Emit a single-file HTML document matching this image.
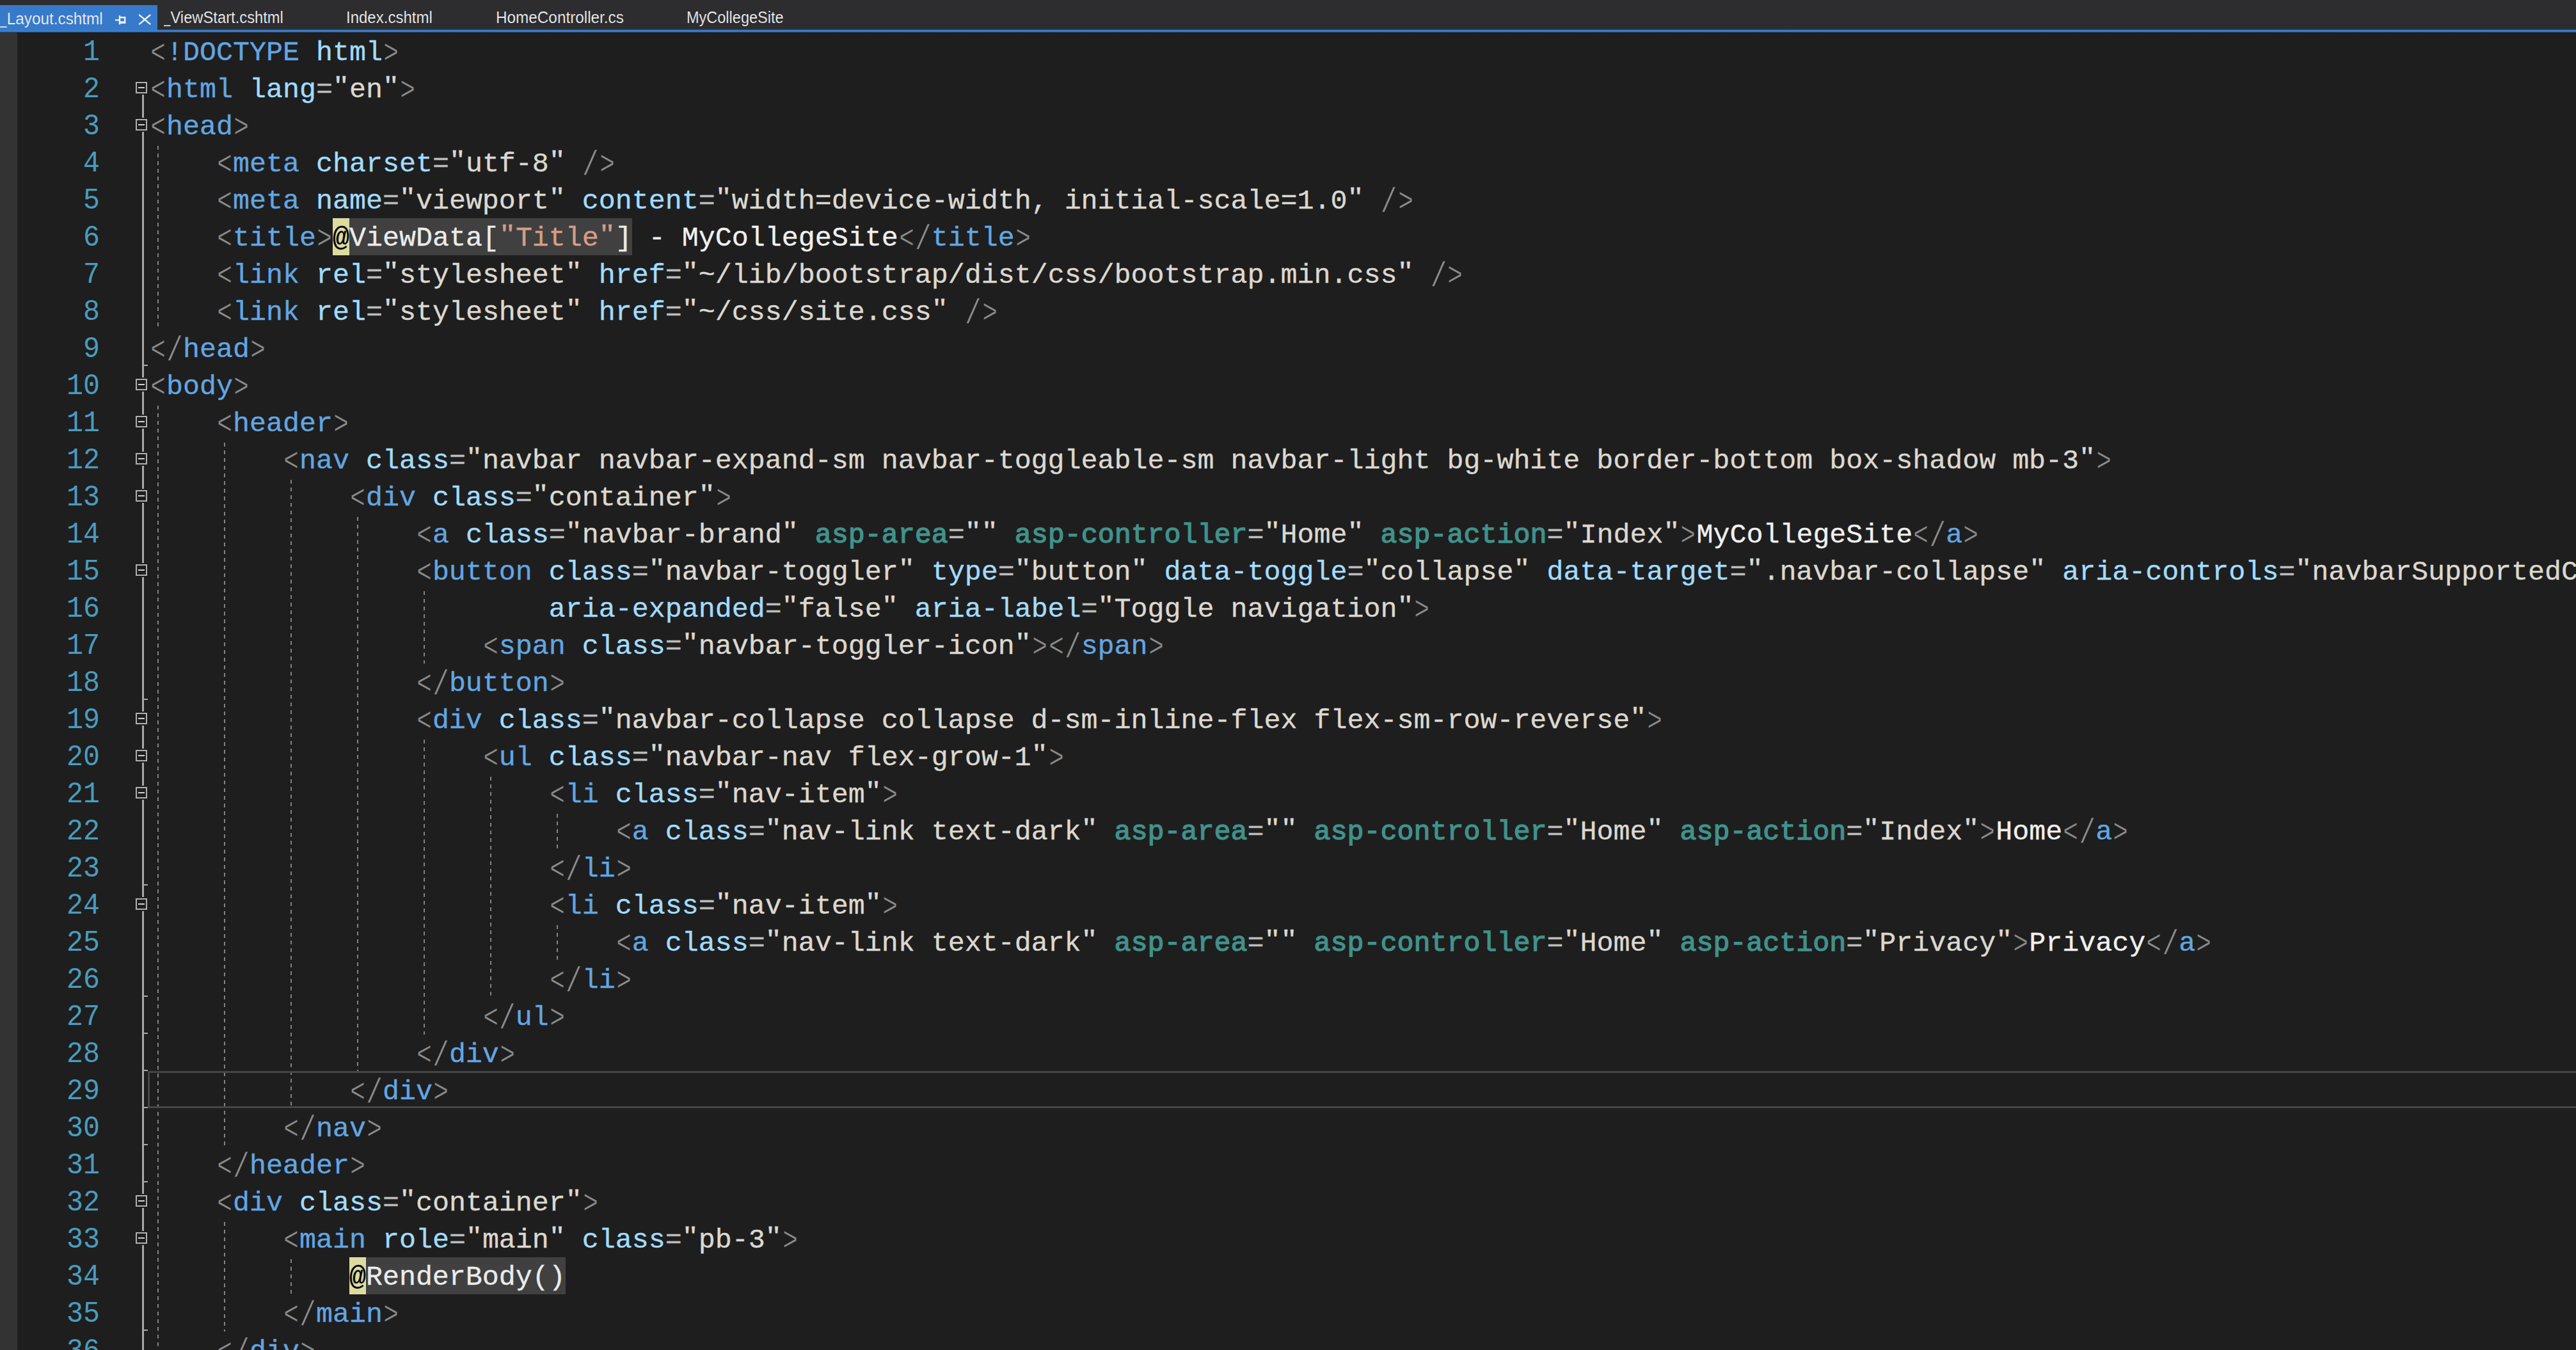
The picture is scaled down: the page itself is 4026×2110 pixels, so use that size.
<!DOCTYPE html><html><head><meta charset="utf-8"><style>
html,body{margin:0;padding:0}
body{width:4026px;height:2110px;background:#1e1e1e;overflow:hidden;position:relative;font-family:"Liberation Mono",monospace}
#tabs{position:absolute;left:0;top:0;width:4026px;height:46px;background:#2d2d30}
#bl{position:absolute;left:0;top:44px;width:4026px;height:8px;background:linear-gradient(to bottom,#302a2a 0px,#302a2a 1px,rgba(58,128,212,.12) 1px,rgba(58,128,212,.12) 2px,rgba(58,128,212,.45) 2px,rgba(58,128,212,.45) 3px,rgb(58,128,212) 3px,rgb(58,128,212) 4px,rgb(58,128,212) 4px,rgb(58,128,212) 5px,rgba(58,128,212,.85) 5px,rgba(58,128,212,.85) 6px,rgba(58,128,212,.35) 6px,rgba(58,128,212,.35) 7px,#1d1b1a 7px,#1d1b1a 8px)}
.us{display:inline-block;width:11px;overflow:hidden;vertical-align:top;height:30px}
.tab{-webkit-text-stroke:0.2px #2d2d30;transform-origin:0 0;position:absolute;height:30px;line-height:30px;font-family:"Liberation Sans",sans-serif;font-size:25px;color:#f1f1f1;white-space:pre}
#strip{position:absolute;left:0;top:51px;width:27px;height:2059px;background:#333333}
.ln,.nm{position:absolute;height:58px;line-height:58px;font-size:43.326px;white-space:pre;padding-top:3px;box-sizing:border-box}
.ln{left:234px;-webkit-text-stroke:0.35px currentColor}
.nm{left:0;width:156px;text-align:right;color:#4a9cbd;transform:scaleY(1.07);transform-origin:50% 43.5px}
.d{color:#8c8c8c}.e{color:#62a6e2}.a{color:#a2dcfe}.o{color:#bcbcbc}.v{color:#dcd8d0}.x{color:#f0f0f0}
.t{color:#40928b;-webkit-text-stroke:1.3px #40928b}
.s{color:#d69d85}
i{font-style:normal}
.lt{display:inline-block;transform:translateY(1.4px) scale(0.91,1.19);transform-origin:50% 25.8px}
.d,.d .lt,.d .sl{-webkit-text-stroke:0.5px #1e1e1e}
.q{display:inline-block;transform:translateY(-2.3px) scale(1,0.77);transform-origin:50% 8.7px}
.sl{display:inline-block;transform:translateY(2.5px) scale(1,1.25);transform-origin:50% 30px}
.at{color:#000}
.rz{color:#ebebeb}
.bgy{position:absolute;background:#dcdca0;height:58px}
.bgg{position:absolute;background:#404040;height:58px}
.fb{position:absolute;left:212px;width:18px;height:18px;box-sizing:border-box;border:2.5px solid #b0b0b0;background:#1e1e1e}
.fb::after{content:"";position:absolute;left:2px;top:5.5px;width:9.5px;height:2.6px;background:#d0d0d0}
.fl{position:absolute;left:222px;width:2.5px;background:#a8a8a8}
.tk{position:absolute;left:222px;width:9px;height:2px;background:#a8a8a8}
.gd{position:absolute;width:2px;background:repeating-linear-gradient(to bottom,transparent -2.8px,transparent 3.2px,#828282 3.2px,#828282 9.2px)}
#cur{position:absolute;left:231px;top:1674px;width:3800px;height:58px;box-sizing:border-box;border:3px solid #464646;border-right:none}
</style></head><body>
<div id="tabs"></div>
<div id="bl"></div>
<div style="position:absolute;left:0;top:8px;width:246px;height:39px;background:#377ac9"></div>
<div class="tab" style="left:0;top:14px;transform:scaleX(0.973);-webkit-text-stroke:0.2px #377ac9"><span class="us">_</span>Layout.cshtml</div>
<svg style="position:absolute;left:178px;top:22px" width="22" height="19" viewBox="0 0 22 19"><path d="M2 9.4H8.5M9 2.3V16.3M9.5 5.2H17.2V13.6H9.5" fill="none" stroke="#eef2f8" stroke-width="2.4"/><path d="M9.5 12.8H17.2" stroke="#eef2f8" stroke-width="3"/></svg>
<svg style="position:absolute;left:214px;top:20px" width="25" height="21" viewBox="0 0 25 21"><path d="M3.3 3L21.2 18.2M21.2 3L3.3 18.2" fill="none" stroke="#eef2f8" stroke-width="2.3"/></svg>
<div class="tab" style="left:256px;top:12px;transform:scaleX(0.95)"><span class="us">_</span>ViewStart.cshtml</div>
<div class="tab" style="left:541px;top:12px;transform:scaleX(0.96)">Index.cshtml</div>
<div class="tab" style="left:775px;top:12px;transform:scaleX(0.972)">HomeController.cs</div>
<div class="tab" style="left:1073px;top:12px;transform:scaleX(0.94)">MyCollegeSite</div>
<div id="strip"></div><div class="gd" style="left:246px;top:225px;height:290px"></div><div class="gd" style="left:246px;top:631px;height:1566px"></div><div class="gd" style="left:350px;top:689px;height:1102px"></div><div class="gd" style="left:454px;top:747px;height:986px"></div><div class="gd" style="left:558px;top:805px;height:870px"></div><div class="gd" style="left:662px;top:921px;height:116px"></div><div class="gd" style="left:662px;top:1153px;height:464px"></div><div class="gd" style="left:766px;top:1211px;height:348px"></div><div class="gd" style="left:870px;top:1269px;height:58px"></div><div class="gd" style="left:870px;top:1443px;height:58px"></div><div class="gd" style="left:350px;top:1907px;height:174px"></div><div class="gd" style="left:454px;top:1965px;height:58px"></div><div class="fl" style="top:148px;height:36px"></div><div class="fl" style="top:206px;height:384px"></div><div class="fl" style="top:612px;height:36px"></div><div class="fl" style="top:670px;height:36px"></div><div class="fl" style="top:728px;height:36px"></div><div class="fl" style="top:786px;height:94px"></div><div class="fl" style="top:902px;height:210px"></div><div class="fl" style="top:1134px;height:36px"></div><div class="fl" style="top:1192px;height:36px"></div><div class="fl" style="top:1250px;height:152px"></div><div class="fl" style="top:1424px;height:442px"></div><div class="fl" style="top:1888px;height:36px"></div><div class="fl" style="top:1946px;height:164px"></div><div class="tk" style="top:570px"></div><div class="tk" style="top:1092px"></div><div class="tk" style="top:1382px"></div><div class="tk" style="top:1556px"></div><div class="tk" style="top:1614px"></div><div class="tk" style="top:1672px"></div><div class="tk" style="top:1730px"></div><div class="tk" style="top:1788px"></div><div class="tk" style="top:1846px"></div><div class="tk" style="top:2078px"></div><div class="fb" style="top:128px"></div><div class="fb" style="top:186px"></div><div class="fb" style="top:592px"></div><div class="fb" style="top:650px"></div><div class="fb" style="top:708px"></div><div class="fb" style="top:766px"></div><div class="fb" style="top:882px"></div><div class="fb" style="top:1114px"></div><div class="fb" style="top:1172px"></div><div class="fb" style="top:1230px"></div><div class="fb" style="top:1404px"></div><div class="fb" style="top:1868px"></div><div class="fb" style="top:1926px"></div><div class="nm" style="top:51px">1</div><div class="nm" style="top:109px">2</div><div class="nm" style="top:167px">3</div><div class="nm" style="top:225px">4</div><div class="nm" style="top:283px">5</div><div class="nm" style="top:341px">6</div><div class="nm" style="top:399px">7</div><div class="nm" style="top:457px">8</div><div class="nm" style="top:515px">9</div><div class="nm" style="top:573px">10</div><div class="nm" style="top:631px">11</div><div class="nm" style="top:689px">12</div><div class="nm" style="top:747px">13</div><div class="nm" style="top:805px">14</div><div class="nm" style="top:863px">15</div><div class="nm" style="top:921px">16</div><div class="nm" style="top:979px">17</div><div class="nm" style="top:1037px">18</div><div class="nm" style="top:1095px">19</div><div class="nm" style="top:1153px">20</div><div class="nm" style="top:1211px">21</div><div class="nm" style="top:1269px">22</div><div class="nm" style="top:1327px">23</div><div class="nm" style="top:1385px">24</div><div class="nm" style="top:1443px">25</div><div class="nm" style="top:1501px">26</div><div class="nm" style="top:1559px">27</div><div class="nm" style="top:1617px">28</div><div class="nm" style="top:1675px">29</div><div class="nm" style="top:1733px">30</div><div class="nm" style="top:1791px">31</div><div class="nm" style="top:1849px">32</div><div class="nm" style="top:1907px">33</div><div class="nm" style="top:1965px">34</div><div class="nm" style="top:2023px">35</div><div class="nm" style="top:2081px">36</div><div id="cur"></div><div class="bgy" style="left:520px;top:341px;width:26px"></div><div class="bgg" style="left:546px;top:341px;width:442px"></div><div class="bgy" style="left:546px;top:1965px;width:26px"></div><div class="bgg" style="left:572px;top:1965px;width:312px"></div><div class="ln" style="top:51px"><span class="d"><i class="lt">&lt;</i></span><span class="e">!DOCTYPE</span> <span class="a">html</span><span class="d"><i class="lt">&gt;</i></span></div><div class="ln" style="top:109px"><span class="d"><i class="lt">&lt;</i></span><span class="e">html</span> <span class="a">lang</span><span class="o">=</span><span class="v"><i class="q">"</i>en<i class="q">"</i></span><span class="d"><i class="lt">&gt;</i></span></div><div class="ln" style="top:167px"><span class="d"><i class="lt">&lt;</i></span><span class="e">head</span><span class="d"><i class="lt">&gt;</i></span></div><div class="ln" style="top:225px">    <span class="d"><i class="lt">&lt;</i></span><span class="e">meta</span> <span class="a">charset</span><span class="o">=</span><span class="v"><i class="q">"</i>utf-8<i class="q">"</i></span> <span class="d"><i class="sl">/</i><i class="lt">&gt;</i></span></div><div class="ln" style="top:283px">    <span class="d"><i class="lt">&lt;</i></span><span class="e">meta</span> <span class="a">name</span><span class="o">=</span><span class="v"><i class="q">"</i>viewport<i class="q">"</i></span> <span class="a">content</span><span class="o">=</span><span class="v"><i class="q">"</i>width=device-width, initial-scale=1.0<i class="q">"</i></span> <span class="d"><i class="sl">/</i><i class="lt">&gt;</i></span></div><div class="ln" style="top:341px">    <span class="d"><i class="lt">&lt;</i></span><span class="e">title</span><span class="d"><i class="lt">&gt;</i></span><span class="at">@</span><span class="rz">ViewData[<span class="s"><i class="q">"</i>Title<i class="q">"</i></span>]</span><span class="x"> - MyCollegeSite</span><span class="d"><i class="lt">&lt;</i><i class="sl">/</i></span><span class="e">title</span><span class="d"><i class="lt">&gt;</i></span></div><div class="ln" style="top:399px">    <span class="d"><i class="lt">&lt;</i></span><span class="e">link</span> <span class="a">rel</span><span class="o">=</span><span class="v"><i class="q">"</i>stylesheet<i class="q">"</i></span> <span class="a">href</span><span class="o">=</span><span class="v"><i class="q">"</i>~/lib/bootstrap/dist/css/bootstrap.min.css<i class="q">"</i></span> <span class="d"><i class="sl">/</i><i class="lt">&gt;</i></span></div><div class="ln" style="top:457px">    <span class="d"><i class="lt">&lt;</i></span><span class="e">link</span> <span class="a">rel</span><span class="o">=</span><span class="v"><i class="q">"</i>stylesheet<i class="q">"</i></span> <span class="a">href</span><span class="o">=</span><span class="v"><i class="q">"</i>~/css/site.css<i class="q">"</i></span> <span class="d"><i class="sl">/</i><i class="lt">&gt;</i></span></div><div class="ln" style="top:515px"><span class="d"><i class="lt">&lt;</i><i class="sl">/</i></span><span class="e">head</span><span class="d"><i class="lt">&gt;</i></span></div><div class="ln" style="top:573px"><span class="d"><i class="lt">&lt;</i></span><span class="e">body</span><span class="d"><i class="lt">&gt;</i></span></div><div class="ln" style="top:631px">    <span class="d"><i class="lt">&lt;</i></span><span class="e">header</span><span class="d"><i class="lt">&gt;</i></span></div><div class="ln" style="top:689px">        <span class="d"><i class="lt">&lt;</i></span><span class="e">nav</span> <span class="a">class</span><span class="o">=</span><span class="v"><i class="q">"</i>navbar navbar-expand-sm navbar-toggleable-sm navbar-light bg-white border-bottom box-shadow mb-3<i class="q">"</i></span><span class="d"><i class="lt">&gt;</i></span></div><div class="ln" style="top:747px">            <span class="d"><i class="lt">&lt;</i></span><span class="e">div</span> <span class="a">class</span><span class="o">=</span><span class="v"><i class="q">"</i>container<i class="q">"</i></span><span class="d"><i class="lt">&gt;</i></span></div><div class="ln" style="top:805px">                <span class="d"><i class="lt">&lt;</i></span><span class="e">a</span> <span class="a">class</span><span class="o">=</span><span class="v"><i class="q">"</i>navbar-brand<i class="q">"</i></span> <span class="t">asp-area</span><span class="o">=</span><span class="v"><i class="q">"</i><i class="q">"</i></span> <span class="t">asp-controller</span><span class="o">=</span><span class="v"><i class="q">"</i>Home<i class="q">"</i></span> <span class="t">asp-action</span><span class="o">=</span><span class="v"><i class="q">"</i>Index<i class="q">"</i></span><span class="d"><i class="lt">&gt;</i></span><span class="x">MyCollegeSite</span><span class="d"><i class="lt">&lt;</i><i class="sl">/</i></span><span class="e">a</span><span class="d"><i class="lt">&gt;</i></span></div><div class="ln" style="top:863px">                <span class="d"><i class="lt">&lt;</i></span><span class="e">button</span> <span class="a">class</span><span class="o">=</span><span class="v"><i class="q">"</i>navbar-toggler<i class="q">"</i></span> <span class="a">type</span><span class="o">=</span><span class="v"><i class="q">"</i>button<i class="q">"</i></span> <span class="a">data-toggle</span><span class="o">=</span><span class="v"><i class="q">"</i>collapse<i class="q">"</i></span> <span class="a">data-target</span><span class="o">=</span><span class="v"><i class="q">"</i>.navbar-collapse<i class="q">"</i></span> <span class="a">aria-controls</span><span class="o">=</span><span class="v"><i class="q">"</i>navbarSupportedContent<i class="q">"</i></span></div><div class="ln" style="top:921px">                        <span class="a">aria-expanded</span><span class="o">=</span><span class="v"><i class="q">"</i>false<i class="q">"</i></span> <span class="a">aria-label</span><span class="o">=</span><span class="v"><i class="q">"</i>Toggle navigation<i class="q">"</i></span><span class="d"><i class="lt">&gt;</i></span></div><div class="ln" style="top:979px">                    <span class="d"><i class="lt">&lt;</i></span><span class="e">span</span> <span class="a">class</span><span class="o">=</span><span class="v"><i class="q">"</i>navbar-toggler-icon<i class="q">"</i></span><span class="d"><i class="lt">&gt;</i></span><span class="d"><i class="lt">&lt;</i><i class="sl">/</i></span><span class="e">span</span><span class="d"><i class="lt">&gt;</i></span></div><div class="ln" style="top:1037px">                <span class="d"><i class="lt">&lt;</i><i class="sl">/</i></span><span class="e">button</span><span class="d"><i class="lt">&gt;</i></span></div><div class="ln" style="top:1095px">                <span class="d"><i class="lt">&lt;</i></span><span class="e">div</span> <span class="a">class</span><span class="o">=</span><span class="v"><i class="q">"</i>navbar-collapse collapse d-sm-inline-flex flex-sm-row-reverse<i class="q">"</i></span><span class="d"><i class="lt">&gt;</i></span></div><div class="ln" style="top:1153px">                    <span class="d"><i class="lt">&lt;</i></span><span class="e">ul</span> <span class="a">class</span><span class="o">=</span><span class="v"><i class="q">"</i>navbar-nav flex-grow-1<i class="q">"</i></span><span class="d"><i class="lt">&gt;</i></span></div><div class="ln" style="top:1211px">                        <span class="d"><i class="lt">&lt;</i></span><span class="e">li</span> <span class="a">class</span><span class="o">=</span><span class="v"><i class="q">"</i>nav-item<i class="q">"</i></span><span class="d"><i class="lt">&gt;</i></span></div><div class="ln" style="top:1269px">                            <span class="d"><i class="lt">&lt;</i></span><span class="e">a</span> <span class="a">class</span><span class="o">=</span><span class="v"><i class="q">"</i>nav-link text-dark<i class="q">"</i></span> <span class="t">asp-area</span><span class="o">=</span><span class="v"><i class="q">"</i><i class="q">"</i></span> <span class="t">asp-controller</span><span class="o">=</span><span class="v"><i class="q">"</i>Home<i class="q">"</i></span> <span class="t">asp-action</span><span class="o">=</span><span class="v"><i class="q">"</i>Index<i class="q">"</i></span><span class="d"><i class="lt">&gt;</i></span><span class="x">Home</span><span class="d"><i class="lt">&lt;</i><i class="sl">/</i></span><span class="e">a</span><span class="d"><i class="lt">&gt;</i></span></div><div class="ln" style="top:1327px">                        <span class="d"><i class="lt">&lt;</i><i class="sl">/</i></span><span class="e">li</span><span class="d"><i class="lt">&gt;</i></span></div><div class="ln" style="top:1385px">                        <span class="d"><i class="lt">&lt;</i></span><span class="e">li</span> <span class="a">class</span><span class="o">=</span><span class="v"><i class="q">"</i>nav-item<i class="q">"</i></span><span class="d"><i class="lt">&gt;</i></span></div><div class="ln" style="top:1443px">                            <span class="d"><i class="lt">&lt;</i></span><span class="e">a</span> <span class="a">class</span><span class="o">=</span><span class="v"><i class="q">"</i>nav-link text-dark<i class="q">"</i></span> <span class="t">asp-area</span><span class="o">=</span><span class="v"><i class="q">"</i><i class="q">"</i></span> <span class="t">asp-controller</span><span class="o">=</span><span class="v"><i class="q">"</i>Home<i class="q">"</i></span> <span class="t">asp-action</span><span class="o">=</span><span class="v"><i class="q">"</i>Privacy<i class="q">"</i></span><span class="d"><i class="lt">&gt;</i></span><span class="x">Privacy</span><span class="d"><i class="lt">&lt;</i><i class="sl">/</i></span><span class="e">a</span><span class="d"><i class="lt">&gt;</i></span></div><div class="ln" style="top:1501px">                        <span class="d"><i class="lt">&lt;</i><i class="sl">/</i></span><span class="e">li</span><span class="d"><i class="lt">&gt;</i></span></div><div class="ln" style="top:1559px">                    <span class="d"><i class="lt">&lt;</i><i class="sl">/</i></span><span class="e">ul</span><span class="d"><i class="lt">&gt;</i></span></div><div class="ln" style="top:1617px">                <span class="d"><i class="lt">&lt;</i><i class="sl">/</i></span><span class="e">div</span><span class="d"><i class="lt">&gt;</i></span></div><div class="ln" style="top:1675px">            <span class="d"><i class="lt">&lt;</i><i class="sl">/</i></span><span class="e">div</span><span class="d"><i class="lt">&gt;</i></span></div><div class="ln" style="top:1733px">        <span class="d"><i class="lt">&lt;</i><i class="sl">/</i></span><span class="e">nav</span><span class="d"><i class="lt">&gt;</i></span></div><div class="ln" style="top:1791px">    <span class="d"><i class="lt">&lt;</i><i class="sl">/</i></span><span class="e">header</span><span class="d"><i class="lt">&gt;</i></span></div><div class="ln" style="top:1849px">    <span class="d"><i class="lt">&lt;</i></span><span class="e">div</span> <span class="a">class</span><span class="o">=</span><span class="v"><i class="q">"</i>container<i class="q">"</i></span><span class="d"><i class="lt">&gt;</i></span></div><div class="ln" style="top:1907px">        <span class="d"><i class="lt">&lt;</i></span><span class="e">main</span> <span class="a">role</span><span class="o">=</span><span class="v"><i class="q">"</i>main<i class="q">"</i></span> <span class="a">class</span><span class="o">=</span><span class="v"><i class="q">"</i>pb-3<i class="q">"</i></span><span class="d"><i class="lt">&gt;</i></span></div><div class="ln" style="top:1965px">            <span class="at">@</span><span class="rz">RenderBody()</span></div><div class="ln" style="top:2023px">        <span class="d"><i class="lt">&lt;</i><i class="sl">/</i></span><span class="e">main</span><span class="d"><i class="lt">&gt;</i></span></div><div class="ln" style="top:2081px">    <span class="d"><i class="lt">&lt;</i><i class="sl">/</i></span><span class="e">div</span><span class="d"><i class="lt">&gt;</i></span></div></body></html>
